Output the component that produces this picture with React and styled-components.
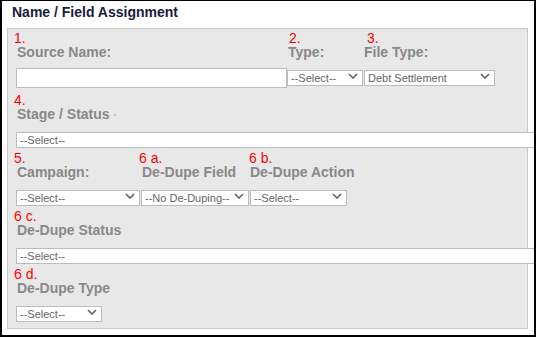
import React from 'react';
import styled, { createGlobalStyle } from 'styled-components';

const GlobalStyle = createGlobalStyle`
  html, body {
    margin: 0;
    padding: 0;
    overflow: hidden;
    background: #fff;
  }
  * {
    box-sizing: border-box;
  }
`;

const Frame = styled.div`
  width: 536px;
  height: 337px;
  border: 2px solid #000;
  border-top-width: 1px;
  overflow: hidden;
  font-family: "Liberation Sans", Arial, sans-serif;
`;

const Title = styled.div`
  height: 27px;
  padding: 4px 0 0 10px;
  font-size: 14px;
  line-height: 14px;
  font-weight: bold;
  color: #1b1b3d;
`;

const Panel = styled.div`
  width: 521px;
  height: 301px;
  margin-left: 5px;
  padding: 2px 0 0 8px;
  background: #e8e8e8;
  border: 1px solid #c9c9c9;
`;

const Group = styled.div`
  padding-top: ${props => (props.first ? 0 : 5)}px;
`;

const Row = styled.div`
  display: flex;
  align-items: flex-start;
`;

const Column = styled.div`
  display: flex;
  flex-direction: column;
  margin-left: ${props => props.gap || 0}px;
`;

const Num = styled.div`
  height: 14px;
  font-size: 14px;
  line-height: 14px;
  color: #f00;
  white-space: nowrap;
  margin-left: ${props => props.offset || 0}px;
`;

const Label = styled.div`
  height: 14px;
  margin-bottom: 9px;
  font-size: 14px;
  line-height: 14px;
  font-weight: bold;
  color: #888;
  white-space: nowrap;
  padding-left: ${props => (props.flush ? 0 : 1)}px;
`;

const Mark = styled.span`
  display: inline-block;
  width: 2px;
  height: 2px;
  margin-left: 4px;
  vertical-align: middle;
  background: #f3a6b4;
`;

const TextInput = styled.input`
  width: ${props => props.width}px;
  height: 20px;
  margin: 0;
  border: 1px solid #bcbcbc;
  background: #fff;
  outline: none;
`;

const SelectWrap = styled.div`
  position: relative;
  width: ${props => props.width}px;
  height: 16px;
`;

const Select = styled.select`
  appearance: none;
  width: 100%;
  height: 16px;
  margin: 0;
  padding: 0 0 0 3px;
  border: 1px solid #bcbcbc;
  border-radius: 0;
  background: #fff;
  font-family: "Liberation Sans", Arial, sans-serif;
  font-size: 11px;
  line-height: 14px;
  color: #666;
  outline: none;
`;

const Chevron = styled.svg`
  position: absolute;
  right: 5px;
  top: 5px;
  pointer-events: none;
`;

function Dropdown({ width, value, arrow = true }) {
  return (
    <SelectWrap width={width}>
      <Select defaultValue={value}>
        <option>{value}</option>
      </Select>
      {arrow && (
        <Chevron width="10" height="6" viewBox="0 0 10 6">
          <path d="M1 1 L5 5 L9 1" fill="none" stroke="#666" strokeWidth="1.7" />
        </Chevron>
      )}
    </SelectWrap>
  );
}

export default function App() {
  return (
    <>
      <GlobalStyle />
      <Frame>
        <Title>Name / Field Assignment</Title>
        <Panel>
          <Group first>
            <Row>
              <Column>
                <Num offset={-2}>1.</Num>
                <Label>Source Name:</Label>
                <TextInput width={271} />
              </Column>
              <Column>
                <Num offset={2}>2.</Num>
                <Label>Type:</Label>
                <Dropdown width={76} value="--Select--" />
              </Column>
              <Column gap={1}>
                <Num offset={3}>3.</Num>
                <Label flush>File Type:</Label>
                <Dropdown width={131} value="Debt Settlement" />
              </Column>
            </Row>
          </Group>

          <Group>
            <Num offset={-2}>4.</Num>
            <Label>Stage / Status<Mark /></Label>
            <Dropdown width={560} value="--Select--" arrow={false} />
          </Group>

          <Group>
            <Row>
              <Column>
                <Num offset={-2}>5.</Num>
                <Label>Campaign:</Label>
                <Dropdown width={124} value="--Select--" />
              </Column>
              <Column gap={1}>
                <Num offset={-2}>6 a.</Num>
                <Label>De-Dupe Field</Label>
                <Dropdown width={108} value="--No De-Duping--" />
              </Column>
              <Column gap={1}>
                <Num offset={-1}>6 b.</Num>
                <Label flush>De-Dupe Action</Label>
                <Dropdown width={97} value="--Select--" />
              </Column>
            </Row>
          </Group>

          <Group>
            <Num offset={-2}>6 c.</Num>
            <Label>De-Dupe Status</Label>
            <Dropdown width={560} value="--Select--" arrow={false} />
          </Group>

          <Group>
            <Num offset={-2}>6 d.</Num>
            <Label>De-Dupe Type</Label>
            <Dropdown width={86} value="--Select--" />
          </Group>
        </Panel>
      </Frame>
    </>
  );
}
